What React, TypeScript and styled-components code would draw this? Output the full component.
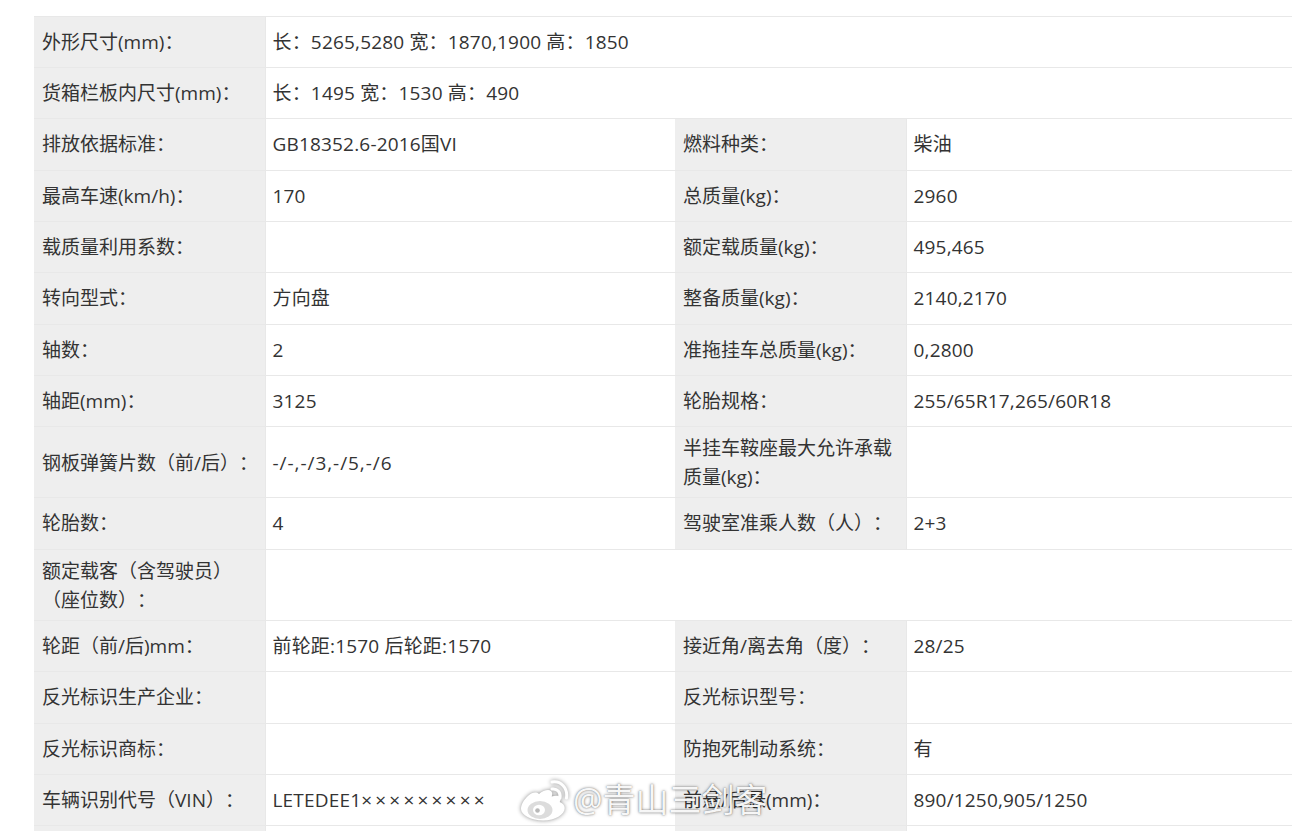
import React from "react";
import styled, { createGlobalStyle } from "styled-components";

const Global = createGlobalStyle`
  html, body { margin: 0; padding: 0; background: #fff; overflow: hidden; height: 831px; }
`;

const Page = styled.div`
  position: relative;
  width: 1292px;
  height: 831px;
  overflow: hidden;
  padding: 16px 0 0 34px;
  box-sizing: border-box;
`;

const Table = styled.table`
  width: 1270px;
  table-layout: fixed;
  border-collapse: collapse;
  font-family: "Open Sans", "Noto Sans CJK SC", sans-serif;
  font-size: 19px;
  line-height: 29px;
  color: #333;
  text-spacing-trim: space-all;
`;

const Row = styled.tr<{ $h: number }>`
  height: ${(p) => p.$h}px;

  td {
    padding-top: ${(p) => (p.$h > 60 ? 2 : 0)}px;
  }
`;

const Label = styled.td`
  background: #eee;
  border: 1px solid #e8e8e8;
  border-left: none;
  padding: 0 4px 0 8px;
  vertical-align: middle;
  box-sizing: border-box;
`;

const Value = styled.td`
  background: #fff;
  border: 1px solid #e8e8e8;
  border-right: none;
  padding: 0 7px;
  vertical-align: middle;
  box-sizing: border-box;
  letter-spacing: 0.18px;
`;

const Mask = styled.span`
  letter-spacing: 3.2px;
`;

const Dashes = styled.span`
  letter-spacing: 0.95px;
`;

const Watermark = styled.div`
  position: absolute;
  left: 517px;
  top: 776px;
  display: flex;
  align-items: center;
  gap: 4px;
  color: rgba(255, 255, 255, 0.95);
  font-family: "Open Sans", "Noto Sans CJK SC", sans-serif;
  font-size: 33px;
  line-height: 48px;
  text-shadow: 0 0 3px rgba(0, 0, 0, 0.5), 0 0 1px rgba(0, 0, 0, 0.3);
  white-space: nowrap;
`;

const WeiboIcon = styled.svg`
  width: 52px;
  height: 46px;
  flex: none;
  filter: drop-shadow(0 0 2px rgba(0, 0, 0, 0.45));
`;

type Cells = [string, React.ReactNode, string?, string?] | [string, React.ReactNode, string, React.ReactNode];
type R = { h: number; cells: Cells };

const rows: R[] = [
  { h: 51, cells: ["外形尺寸(mm)：", "长：5265,5280 宽：1870,1900 高：1850"] },
  { h: 51, cells: ["货箱栏板内尺寸(mm)：", "长：1495 宽：1530 高：490"] },
  { h: 52, cells: ["排放依据标准：", "GB18352.6-2016国VI", "燃料种类：", "柴油"] },
  { h: 51, cells: ["最高车速(km/h)：", "170", "总质量(kg)：", "2960"] },
  { h: 51, cells: ["载质量利用系数：", "", "额定载质量(kg)：", "495,465"] },
  { h: 52, cells: ["转向型式：", "方向盘", "整备质量(kg)：", "2140,2170"] },
  { h: 51, cells: ["轴数：", "2", "准拖挂车总质量(kg)：", "0,2800"] },
  { h: 51, cells: ["轴距(mm)：", "3125", "轮胎规格：", "255/65R17,265/60R18"] },
  {
    h: 71,
    cells: ["钢板弹簧片数（前/后）：", <Dashes>-/-,-/3,-/5,-/6</Dashes>, "半挂车鞍座最大允许承载质量(kg)：", ""],
  },
  { h: 52, cells: ["轮胎数：", "4", "驾驶室准乘人数（人）：", "2+3"] },
  { h: 71, cells: ["额定载客（含驾驶员）（座位数）：", ""] },
  { h: 51, cells: ["轮距（前/后)mm：", "前轮距:1570 后轮距:1570", "接近角/离去角（度）：", "28/25"] },
  { h: 52, cells: ["反光标识生产企业：", "", "反光标识型号：", ""] },
  { h: 51, cells: ["反光标识商标：", "", "防抱死制动系统：", "有"] },
  {
    h: 51,
    cells: [
      "车辆识别代号（VIN）：",
      <>
        LETEDEE1<Mask>×××××××××</Mask>
      </>,
      "前悬/后悬(mm)：",
      "890/1250,905/1250",
    ],
  },
  { h: 51, cells: ["", "", "", ""] },
];

export default function App() {
  return (
    <Page>
      <Global />
      <Table>
        <colgroup>
          <col style={{ width: 231 }} />
          <col style={{ width: 410 }} />
          <col style={{ width: 231 }} />
          <col />
        </colgroup>
        <tbody>
          {rows.map((r, i) => (
            <Row key={i} $h={r.h}>
              <Label>{r.cells[0]}</Label>
              {r.cells.length === 2 ? (
                <Value colSpan={3}>{r.cells[1]}</Value>
              ) : (
                <>
                  <Value>{r.cells[1]}</Value>
                  <Label>{r.cells[2]}</Label>
                  <Value>{r.cells[3]}</Value>
                </>
              )}
            </Row>
          ))}
        </tbody>
      </Table>
      <Watermark>
        <WeiboIcon viewBox="0 0 52 46" aria-hidden="true">
          <path
            fill="#fff"
            d="M22 17c4-3.500 9.500-5 12-3 1.600 1.400 1.300 3.500.7 5.600 3-1 6.800-1.400 8.300.6 1 1.400.6 3.200-.3 4.800 2.600 1 5 3 5 6 0 6.500-9.500 12.500-21.500 12.500S4 38 4 32c0-4.500 3-9.500 7.500-13.500C15 15.500 19 14.500 22 17Z"
          />
          <ellipse cx="23" cy="33" rx="12.500" ry="9" fill="#dcdcdc" />
          <ellipse cx="22" cy="33" rx="6" ry="5.200" fill="#fff" />
          <circle cx="20.500" cy="33.500" r="2.300" fill="#b8b8b8" />
          <path d="M35 12c5-.8 9 3 8 9" fill="none" stroke="#fff" strokeWidth="3" strokeLinecap="round" />
          <path d="M35 5c9-1.500 16 6 14.500 16" fill="none" stroke="#fff" strokeWidth="3" strokeLinecap="round" />
        </WeiboIcon>
        <span>@青山三剑客</span>
      </Watermark>
    </Page>
  );
}
